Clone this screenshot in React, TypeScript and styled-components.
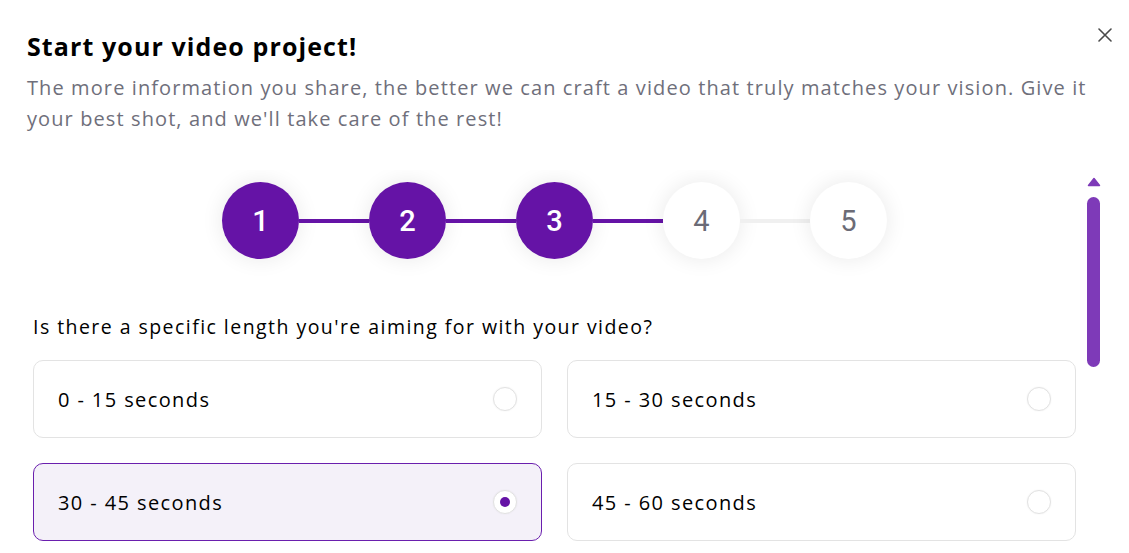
import React from "react";
import styled, { createGlobalStyle } from "styled-components";

const Global = createGlobalStyle`
  html, body { margin: 0; padding: 0; background: #ffffff; }
  body { font-family: "Open Sans", "Noto Sans", sans-serif; }
  * { box-sizing: border-box; }
`;

const Modal = styled.div`
  position: relative;
  width: 1129px;
  height: 553px;
  display: flex;
  flex-direction: column;
  background: #fff;
  overflow: hidden;
`;

const Header = styled.header`
  padding: 28px 30px 0 27px;
`;

const Title = styled.h2`
  margin: 0;
  font-family: "Open Sans", sans-serif;
  font-size: 25px;
  line-height: 37px;
  font-weight: 700;
  color: #000;
  letter-spacing: 1.1px;
`;

const Subtitle = styled.p`
  margin: 7px 0 0;
  font-family: "Open Sans", sans-serif;
  font-size: 20px;
  line-height: 31px;
  font-weight: 400;
  color: #6f6f7b;
  letter-spacing: 1.1px;
`;

const CloseButton = styled.button`
  position: absolute;
  top: 27px;
  right: 16px;
  width: 16px;
  height: 16px;
  padding: 0;
  border: 0;
  background: transparent;
  display: flex;
  align-items: center;
  justify-content: center;
  cursor: pointer;
`;

const ScrollArea = styled.div`
  margin: 36px 28px 0 27px;
  flex: 1;
  min-height: 0;
  display: flex;
`;

const ScrollContent = styled.div`
  flex: 1;
  min-width: 0;
  overflow: hidden;
  padding: 12px 10px 0 6px;
`;

const ScrollTrack = styled.div`
  width: 15px;
  flex: none;
  display: flex;
  flex-direction: column;
  align-items: center;
  padding-top: 7px;
`;

const ScrollThumb = styled.div`
  margin-top: 10px;
  width: 13px;
  height: 170px;
  border-radius: 7px;
  background: #7e3ab8;
`;

const Stepper = styled.div`
  display: flex;
  align-items: center;
  justify-content: center;
`;

const StepCircle = styled.div<{ $active: boolean }>`
  width: 77px;
  height: 77px;
  border-radius: 50%;
  flex: none;
  display: flex;
  align-items: center;
  justify-content: center;
  font-family: "Roboto", sans-serif;
  font-size: 29px;
  font-weight: ${(p) => (p.$active ? 500 : 400)};
  background: ${(p) => (p.$active ? "#6513a6" : "#ffffff")};
  color: ${(p) => (p.$active ? "#ffffff" : "#6b6b76")};
  box-shadow: 0 0 22px rgba(0, 0, 0, 0.09);
`;

const Connector = styled.div<{ $active: boolean }>`
  width: 70px;
  height: 4px;
  flex: none;
  background: ${(p) => (p.$active ? "#6513a6" : "#f0f0f0")};
`;

const Question = styled.h3`
  margin: 55px 0 0;
  font-family: "Open Sans", sans-serif;
  font-size: 19.5px;
  line-height: 26px;
  font-weight: 500;
  color: #000;
  letter-spacing: 1.45px;
`;

const Options = styled.div`
  margin-top: 20px;
  display: grid;
  grid-template-columns: 1fr 1fr;
  gap: 25px;
`;

const Option = styled.label<{ $selected: boolean }>`
  height: 78px;
  display: flex;
  align-items: center;
  justify-content: space-between;
  padding: 0 24px 0 24px;
  border-radius: 10px;
  border: 1px solid ${(p) => (p.$selected ? "#6a1fae" : "#e3e3e3")};
  background: ${(p) => (p.$selected ? "#f4f1f9" : "#ffffff")};
  font-family: "Open Sans", sans-serif;
  font-size: 20px;
  color: #000;
  letter-spacing: 1.4px;
  cursor: pointer;
`;

const Radio = styled.span<{ $checked: boolean }>`
  width: 24px;
  height: 24px;
  border-radius: 50%;
  border: 1px solid #e2e2e2;
  background: #fff;
  box-shadow: 0 0 2px rgba(0, 0, 0, 0.06);
  display: flex;
  align-items: center;
  justify-content: center;
  &::after {
    content: "";
    width: 10px;
    height: 10px;
    border-radius: 50%;
    background: #6513a6;
    display: ${(p) => (p.$checked ? "block" : "none")};
  }
`;

const steps = [1, 2, 3, 4, 5];
const current = 3;
const options = ["0 - 15 seconds", "15 - 30 seconds", "30 - 45 seconds", "45 - 60 seconds"];
const selected = "30 - 45 seconds";

export default function App() {
  return (
    <>
      <Global />
      <Modal>
        <Header>
          <Title>Start your video project!</Title>
          <Subtitle>
            The more information you share, the better we can craft a video that truly matches your vision. Give it
            your best shot, and we'll take care of the rest!
          </Subtitle>
        </Header>
        <CloseButton aria-label="Close">
          <svg width="14" height="14" viewBox="0 0 14 14" fill="none">
            <path d="M1 1L13 13M13 1L1 13" stroke="#4a4a4a" strokeWidth="1.6" strokeLinecap="round" />
          </svg>
        </CloseButton>
        <ScrollArea>
          <ScrollContent>
            <Stepper>
              {steps.map((s, i) => (
                <React.Fragment key={s}>
                  {i > 0 && <Connector $active={s - 1 <= current} />}
                  <StepCircle $active={s <= current}>{s}</StepCircle>
                </React.Fragment>
              ))}
            </Stepper>
            <Question>Is there a specific length you're aiming for with your video?</Question>
            <Options>
              {options.map((o) => (
                <Option key={o} $selected={o === selected}>
                  <span>{o}</span>
                  <Radio $checked={o === selected} />
                </Option>
              ))}
            </Options>
          </ScrollContent>
          <ScrollTrack aria-hidden="true">
            <svg width="14" height="10" viewBox="0 0 14 10">
              <path d="M7 1.5L12.5 8.5H1.5Z" fill="#7e3ab8" stroke="#7e3ab8" strokeWidth="1.5" strokeLinejoin="round" />
            </svg>
            <ScrollThumb />
          </ScrollTrack>
        </ScrollArea>
      </Modal>
    </>
  );
}
